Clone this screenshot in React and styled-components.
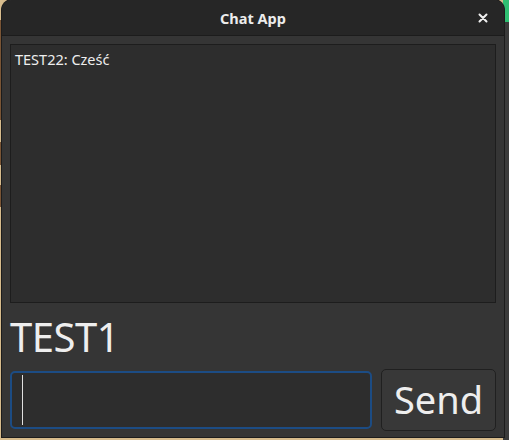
import React from 'react';
import styled, { createGlobalStyle } from 'styled-components';

const Global = createGlobalStyle`
  html, body {
    margin: 0;
    padding: 0;
    width: 509px;
    height: 440px;
    overflow: hidden;
    background: #cdb487;
  }
  * { box-sizing: border-box; }
`;

const Desktop = styled.div`
  width: 509px;
  height: 440px;
  padding: 0 5px 3px 2px;
  display: flex;
  background:
    linear-gradient(to bottom, #2fbf72 0, #2fbf72 22px, #3b3b3b 22px, #3b3b3b 100%) right top / 6px 100% no-repeat,
    linear-gradient(to bottom, #d8bd8e 0, #d8bd8e 20px, #7a5535 20px, #7a5535 120px, #d6bb8c 120px, #d6bb8c 142px, #7a5535 142px, #7a5535 165px, #d6bb8c 165px, #d6bb8c 185px, #7a5535 185px, #7a5535 207px, #d6bb8c 207px) left top / 2px 100% no-repeat,
    #d6bb8c;
  font-family: "Noto Sans", "Open Sans", sans-serif;
`;

const Window = styled.div`
  flex: 1;
  display: flex;
  flex-direction: column;
  background: #353535;
  border-radius: 10px 10px 0 0;
  overflow: hidden;
  box-shadow: 0 0 0 1px #1c1c1c;
`;

const TitleBar = styled.div`
  height: 36px;
  flex: none;
  display: flex;
  align-items: center;
  justify-content: center;
  position: relative;
  background: #262626;
  border-bottom: 1px solid #1c1c1c;
  color: #ececec;
  font-weight: 700;
  font-size: 14.5px;
`;

const CloseButton = styled.span`
  position: absolute;
  right: 12px;
  top: 9px;
  width: 18px;
  height: 18px;
  display: flex;
  align-items: center;
  justify-content: center;
`;

const Body = styled.div`
  flex: 1;
  display: flex;
  flex-direction: column;
  padding: 8px;
`;

const Messages = styled.div`
  height: 259px;
  flex: none;
  background: #2d2d2d;
  border: 1px solid #1d1d1d;
  padding: 5px 4px;
  color: #eeeeee;
  font-size: 14.5px;
  line-height: 18px;
`;

const UserLabel = styled.div`
  color: #eeeeee;
  font-size: 40px;
  line-height: 48px;
  margin-top: 10px;
  letter-spacing: -0.5px;
`;

const InputRow = styled.div`
  display: flex;
  align-items: center;
  gap: 9px;
  margin-top: 8px;
`;

const TextInput = styled.div`
  flex: 1;
  height: 58px;
  background: #2d2d2d;
  border: 2px solid #1c4c84;
  border-radius: 5px;
  display: flex;
  align-items: center;
  padding-left: 10px;
`;

const Caret = styled.span`
  width: 1px;
  height: 50px;
  background: #e0e0e0;
`;

const SendButton = styled.div`
  width: 115px;
  height: 62px;
  background: #383838;
  border: 1px solid #202020;
  border-radius: 5px;
  color: #eeeeee;
  font-size: 38px;
  display: flex;
  align-items: center;
  justify-content: center;
  padding-bottom: 2px;
`;

export default function App() {
  return (
    <>
      <Global />
      <Desktop>
        <Window>
          <TitleBar>
            Chat App
            <CloseButton>
              <svg width="10" height="10" viewBox="0 0 10 10">
                <path d="M1.5 1.5 L8.5 8.5 M8.5 1.5 L1.5 8.5" stroke="#f0f0f0" strokeWidth="2" strokeLinecap="round" />
              </svg>
            </CloseButton>
          </TitleBar>
          <Body>
            <Messages>TEST22: Cześć</Messages>
            <UserLabel>TEST1</UserLabel>
            <InputRow>
              <TextInput>
                <Caret />
              </TextInput>
              <SendButton>Send</SendButton>
            </InputRow>
          </Body>
        </Window>
      </Desktop>
    </>
  );
}
